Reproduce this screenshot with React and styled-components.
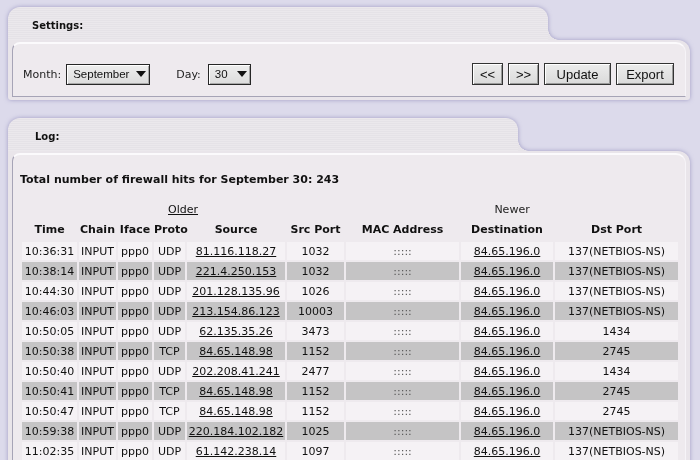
import React from 'react'
import styled, { createGlobalStyle } from 'styled-components'

const GlobalStyle = createGlobalStyle`
  html, body {
    margin: 0;
    padding: 0;
    overflow: hidden;
    background: #dcdaeb;
    font-family: "DejaVu Sans", Verdana, sans-serif;
    color: #111;
  }
`

const Page = styled.div`
  display: flex;
  flex-direction: column;
  gap: 18px;
  padding: 7px 10px 0 8px;
`

const Panel = styled.section`
  display: flex;
  flex-direction: column;
  filter: drop-shadow(0 0 2px rgba(110, 104, 165, 0.55));
`

const Tab = styled.div`
  position: relative;
  width: ${p => p.width}px;
  height: 33px;
  box-sizing: border-box;
  padding: 13px 0 0 ${p => p.indent}px;
  border-radius: 12px 12px 0 0;
  background: repeating-linear-gradient(to bottom, #ebe8ec 0 1px, #e5e2e7 1px 2px);
  font-size: 10px;
  font-weight: bold;
  color: #111;

  &::after {
    content: '';
    position: absolute;
    right: -11px;
    bottom: 0;
    width: 11px;
    height: 11px;
    background: radial-gradient(circle at 100% 0, transparent 10.5px, #e7e4e9 11px);
  }
`

const Body = styled.div`
  background: #e9e5ea;
  border-radius: 0 12px 3px 3px;
  padding: 2px 4px 3px 4px;
`

const Inner = styled.div`
  background: #eeeaee;
  border-top: 2px solid #fbfafc;
  border-left: 1px solid #a6a4b6;
  border-bottom: 1px solid #a6a4b6;
  border-right: 1px solid #f6f4f8;
  border-radius: 8px 10px 0 0;
  padding: ${p => p.pad};
`

const Controls = styled.div`
  display: flex;
  align-items: center;
  height: 22px;
`

const Label = styled.span`
  font-size: 11px;
  color: #222;
  margin-right: ${p => p.gap}px;
`

const Select = styled.div`
  display: flex;
  align-items: center;
  justify-content: space-between;
  box-sizing: border-box;
  width: ${p => p.width}px;
  height: 21px;
  margin-right: ${p => p.after || 0}px;
  padding: 0 3px 1px 6px;
  border: 1px solid #262626;
  background: linear-gradient(#eeeeee, #dcdcdc);
  box-shadow: inset 1px 1px 0 #ffffff, inset -1px -1px 0 #a8a8a8;
  font-family: "Liberation Sans", Arial, sans-serif;
  font-size: 11.5px;
  color: #111;

  svg {
    display: block;
  }
`

const Buttons = styled.div`
  display: flex;
  gap: 5px;
  margin-left: auto;
`

const Button = styled.button`
  box-sizing: border-box;
  width: ${p => p.width}px;
  height: 22px;
  padding: 0;
  border: 1px solid #333;
  background: linear-gradient(#ececec, #dadada);
  box-shadow: inset 1px 1px 0 #ffffff, inset -1px -1px 0 #9a9a9a;
  font-family: "Liberation Sans", Arial, sans-serif;
  font-size: 13px;
  color: #111;
`

const Total = styled.div`
  font-size: 11px;
  line-height: 14px;
  font-weight: bold;
  color: #111;
`

const Table = styled.table`
  width: 660px;
  margin-top: 12px;
  table-layout: fixed;
  border-collapse: separate;
  border-spacing: 2px;
  font-size: 11px;
`

const NavCell = styled.td`
  height: 16px;
  padding: 0;
  text-align: center;
  vertical-align: middle;
  color: #222;
`

const Th = styled.th`
  height: 21px;
  padding: 0;
  text-align: center;
  font-weight: bold;
  color: #111;
`

const Td = styled.td`
  height: 18px;
  padding: 0;
  text-align: center;
  white-space: nowrap;
  overflow: hidden;
  background: ${p => (p.dark ? '#c5c4c5' : '#f5f2f5')};
  color: ${p => (p.dim ? '#555' : '#111')};
`

const Link = styled.a`
  color: #111;
  text-decoration: underline;
`

const Arrow = () => (
  <svg width="10" height="6" viewBox="0 0 10 6">
    <polygon points="0,0 10,0 5,6" fill="#111" />
  </svg>
)

const widths = [55, 37, 34, 31, 98, 57, 113, 92, 123]
const heads = ['Time', 'Chain', 'Iface', 'Proto', 'Source', 'Src Port', 'MAC Address', 'Destination', 'Dst Port']

const rows = [
  ['10:36:31', 'UDP', '81.116.118.27', '1032', '137(NETBIOS-NS)'],
  ['10:38:14', 'UDP', '221.4.250.153', '1032', '137(NETBIOS-NS)'],
  ['10:44:30', 'UDP', '201.128.135.96', '1026', '137(NETBIOS-NS)'],
  ['10:46:03', 'UDP', '213.154.86.123', '10003', '137(NETBIOS-NS)'],
  ['10:50:05', 'UDP', '62.135.35.26', '3473', '1434'],
  ['10:50:38', 'TCP', '84.65.148.98', '1152', '2745'],
  ['10:50:40', 'UDP', '202.208.41.241', '2477', '1434'],
  ['10:50:41', 'TCP', '84.65.148.98', '1152', '2745'],
  ['10:50:47', 'TCP', '84.65.148.98', '1152', '2745'],
  ['10:59:38', 'UDP', '220.184.102.182', '1025', '137(NETBIOS-NS)'],
  ['11:02:35', 'UDP', '61.142.238.14', '1097', '137(NETBIOS-NS)'],
]

const App = () => {
  return (
    <>
      <GlobalStyle />
      <Page>
        <Panel>
          <Tab width={540} indent={24}>Settings:</Tab>
          <Body>
            <Inner pad="19px 11px 11px 10px">
              <Controls>
                <Label gap={5}>Month:</Label>
                <Select width={84} after={26}>
                  September
                  <Arrow />
                </Select>
                <Label gap={7}>Day:</Label>
                <Select width={43}>
                  30
                  <Arrow />
                </Select>
                <Buttons>
                  <Button width={31}>&lt;&lt;</Button>
                  <Button width={31}>&gt;&gt;</Button>
                  <Button width={67}>Update</Button>
                  <Button width={58}>Export</Button>
                </Buttons>
              </Controls>
            </Inner>
          </Body>
        </Panel>

        <Panel>
          <Tab width={510} indent={27}>Log:</Tab>
          <Body>
            <Inner pad="18px 6px 20px 7px">
              <Total>Total number of firewall hits for September 30: 243</Total>
              <Table>
                <colgroup>
                  {widths.map((w, i) => (
                    <col key={i} style={{ width: w }} />
                  ))}
                </colgroup>
                <tbody>
                  <tr>
                    <NavCell colSpan={6}>
                      <Link>Older</Link>
                    </NavCell>
                    <NavCell colSpan={3}>Newer</NavCell>
                  </tr>
                  <tr>
                    {heads.map(h => (
                      <Th key={h}>{h}</Th>
                    ))}
                  </tr>
                  {rows.map((r, i) => {
                    const dark = i % 2 === 1
                    return (
                      <tr key={i}>
                        <Td dark={dark}>{r[0]}</Td>
                        <Td dark={dark}>INPUT</Td>
                        <Td dark={dark}>ppp0</Td>
                        <Td dark={dark}>{r[1]}</Td>
                        <Td dark={dark}><Link>{r[2]}</Link></Td>
                        <Td dark={dark}>{r[3]}</Td>
                        <Td dark={dark} dim>:::::</Td>
                        <Td dark={dark}><Link>84.65.196.0</Link></Td>
                        <Td dark={dark}>{r[4]}</Td>
                      </tr>
                    )
                  })}
                </tbody>
              </Table>
            </Inner>
          </Body>
        </Panel>
      </Page>
    </>
  )
}

export default App
